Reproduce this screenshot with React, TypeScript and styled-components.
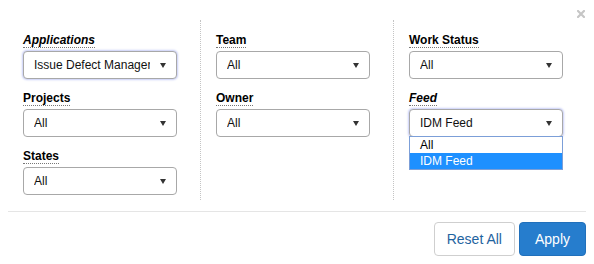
import styled, { createGlobalStyle, css } from 'styled-components';

const GlobalStyle = createGlobalStyle`
  body {
    margin: 0;
    background: #fff;
    font-family: "Liberation Sans", Arial, sans-serif;
    color: #000;
  }
`;

const columns = [
  [
    { label: 'Applications', value: 'Issue Defect Manager', italic: true, focused: true },
    { label: 'Projects', value: 'All' },
    { label: 'States', value: 'All' },
  ],
  [
    { label: 'Team', value: 'All' },
    { label: 'Owner', value: 'All' },
  ],
  [
    { label: 'Work Status', value: 'All' },
    { label: 'Feed', value: 'IDM Feed', italic: true, focused: true, options: ['All', 'IDM Feed'] },
  ],
];

type Field = {
  label: string
  value: string
  italic?: boolean
  focused?: boolean
  options?: string[]
}

const FilterField = ({ label, value, italic = false, focused = false, options }: Field) => (
  <FieldWrap>
    <Label $italic={italic}>{label}</Label>
    <Select $focused={focused}>
      <SelectText>{value}</SelectText>
      <Caret />
      {options && (
        <OptionList>
          {options.map((o) => (
            <Option key={o} $active={o === value}>
              {o}
            </Option>
          ))}
        </OptionList>
      )}
    </Select>
  </FieldWrap>
)

export default function App() {
  return (
    <>
      <GlobalStyle />
      <Modal>
        <Header>
          <CloseButton aria-label="Close">
            <svg width="8" height="8" viewBox="0 0 8 8">
              <path d="M1 1L7 7M7 1L1 7" stroke="#c6c6c6" strokeWidth="2.2" strokeLinecap="square" />
            </svg>
          </CloseButton>
        </Header>
        <Columns>
          {columns.map((fields, i) => (
            <Column key={i} $divided={i > 0}>
              {fields.map((f) => (
                <FilterField key={f.label} {...f} />
              ))}
            </Column>
          ))}
        </Columns>
        <Rule />
        <Footer>
          <Button>Reset All</Button>
          <Button $primary>Apply</Button>
        </Footer>
      </Modal>
    </>
  )
}

const Modal = styled.div`
  width: 594px;
  height: 264px;
  background: #fff;
  box-sizing: border-box;
`;

const Header = styled.div`
  display: flex;
  justify-content: flex-end;
  height: 20px;
  padding: 10px 9px 0 0;
  box-sizing: border-box;
`;

const CloseButton = styled.button`
  display: flex;
  padding: 0;
  border: 0;
  background: none;
  width: 8px;
  height: 8px;
  cursor: pointer;
`;

const Columns = styled.div`
  display: grid;
  grid-template-columns: 192px 193px 193px;
  margin: 0 8px;
`;

const Column = styled.div<{ $divided: boolean }>`
  display: flex;
  flex-direction: column;
  gap: 12px;
  padding: 13px 0 5px 15px;
  ${(p) =>
    p.$divided &&
    css`
      border-left: 1px dotted #c4c4c4;
    `}
`;

const FieldWrap = styled.div`
  display: flex;
  flex-direction: column;
  align-items: flex-start;
  gap: 3px;
`;

const Label = styled.span<{ $italic: boolean }>`
  font-size: 12px;
  font-weight: bold;
  line-height: 14px;
  font-style: ${(p) => (p.$italic ? 'italic' : 'normal')};
  border-bottom: 1px dotted #777;
`;

const Select = styled.div<{ $focused: boolean }>`
  position: relative;
  display: flex;
  align-items: center;
  width: 154px;
  height: 28px;
  padding: 0 10px;
  box-sizing: border-box;
  border: 1px solid #a8a8a8;
  border-radius: 4px;
  background: #fff;
  font-size: 12px;
  color: #111;
  ${(p) =>
    p.$focused &&
    css`
      box-shadow: 0 0 2px 1px rgba(130, 145, 235, 0.45);
    `}
`;

const SelectText = styled.span`
  flex: 1;
  min-width: 0;
  overflow: hidden;
  white-space: nowrap;
`;

const Caret = styled.span`
  margin-left: 10px;
  width: 0;
  height: 0;
  border-left: 3px solid transparent;
  border-right: 3px solid transparent;
  border-top: 5px solid #333;
`;

const OptionList = styled.div`
  position: absolute;
  top: 100%;
  left: -1px;
  width: 154px;
  box-sizing: border-box;
  border: 1px solid #7c9fd8;
  background: #fff;
  z-index: 2;
`;

const Option = styled.div<{ $active: boolean }>`
  height: 16px;
  line-height: 16px;
  padding-left: 10px;
  font-size: 12px;
  color: ${(p) => (p.$active ? '#fff' : '#000')};
  background: ${(p) => (p.$active ? '#1e90ff' : '#fff')};
`;

const Rule = styled.hr`
  margin: 11px 8px 0;
  border: 0;
  border-top: 1px solid #e5e5e5;
`;

const Footer = styled.div`
  display: flex;
  justify-content: flex-end;
  gap: 4px;
  padding: 10px 8px 0;
`;

const Button = styled.button<{ $primary?: boolean }>`
  font-family: inherit;
  font-size: 14px;
  line-height: 20px;
  padding: ${(p) => (p.$primary ? '6px 15px' : '6px 12px')};
  border-radius: 4px;
  cursor: pointer;
  border: 1px solid ${(p) => (p.$primary ? '#2170bb' : '#cfcfcf')};
  background: ${(p) => (p.$primary ? '#267dcd' : '#fff')};
  color: ${(p) => (p.$primary ? '#fff' : '#1f64a0')};
`;
